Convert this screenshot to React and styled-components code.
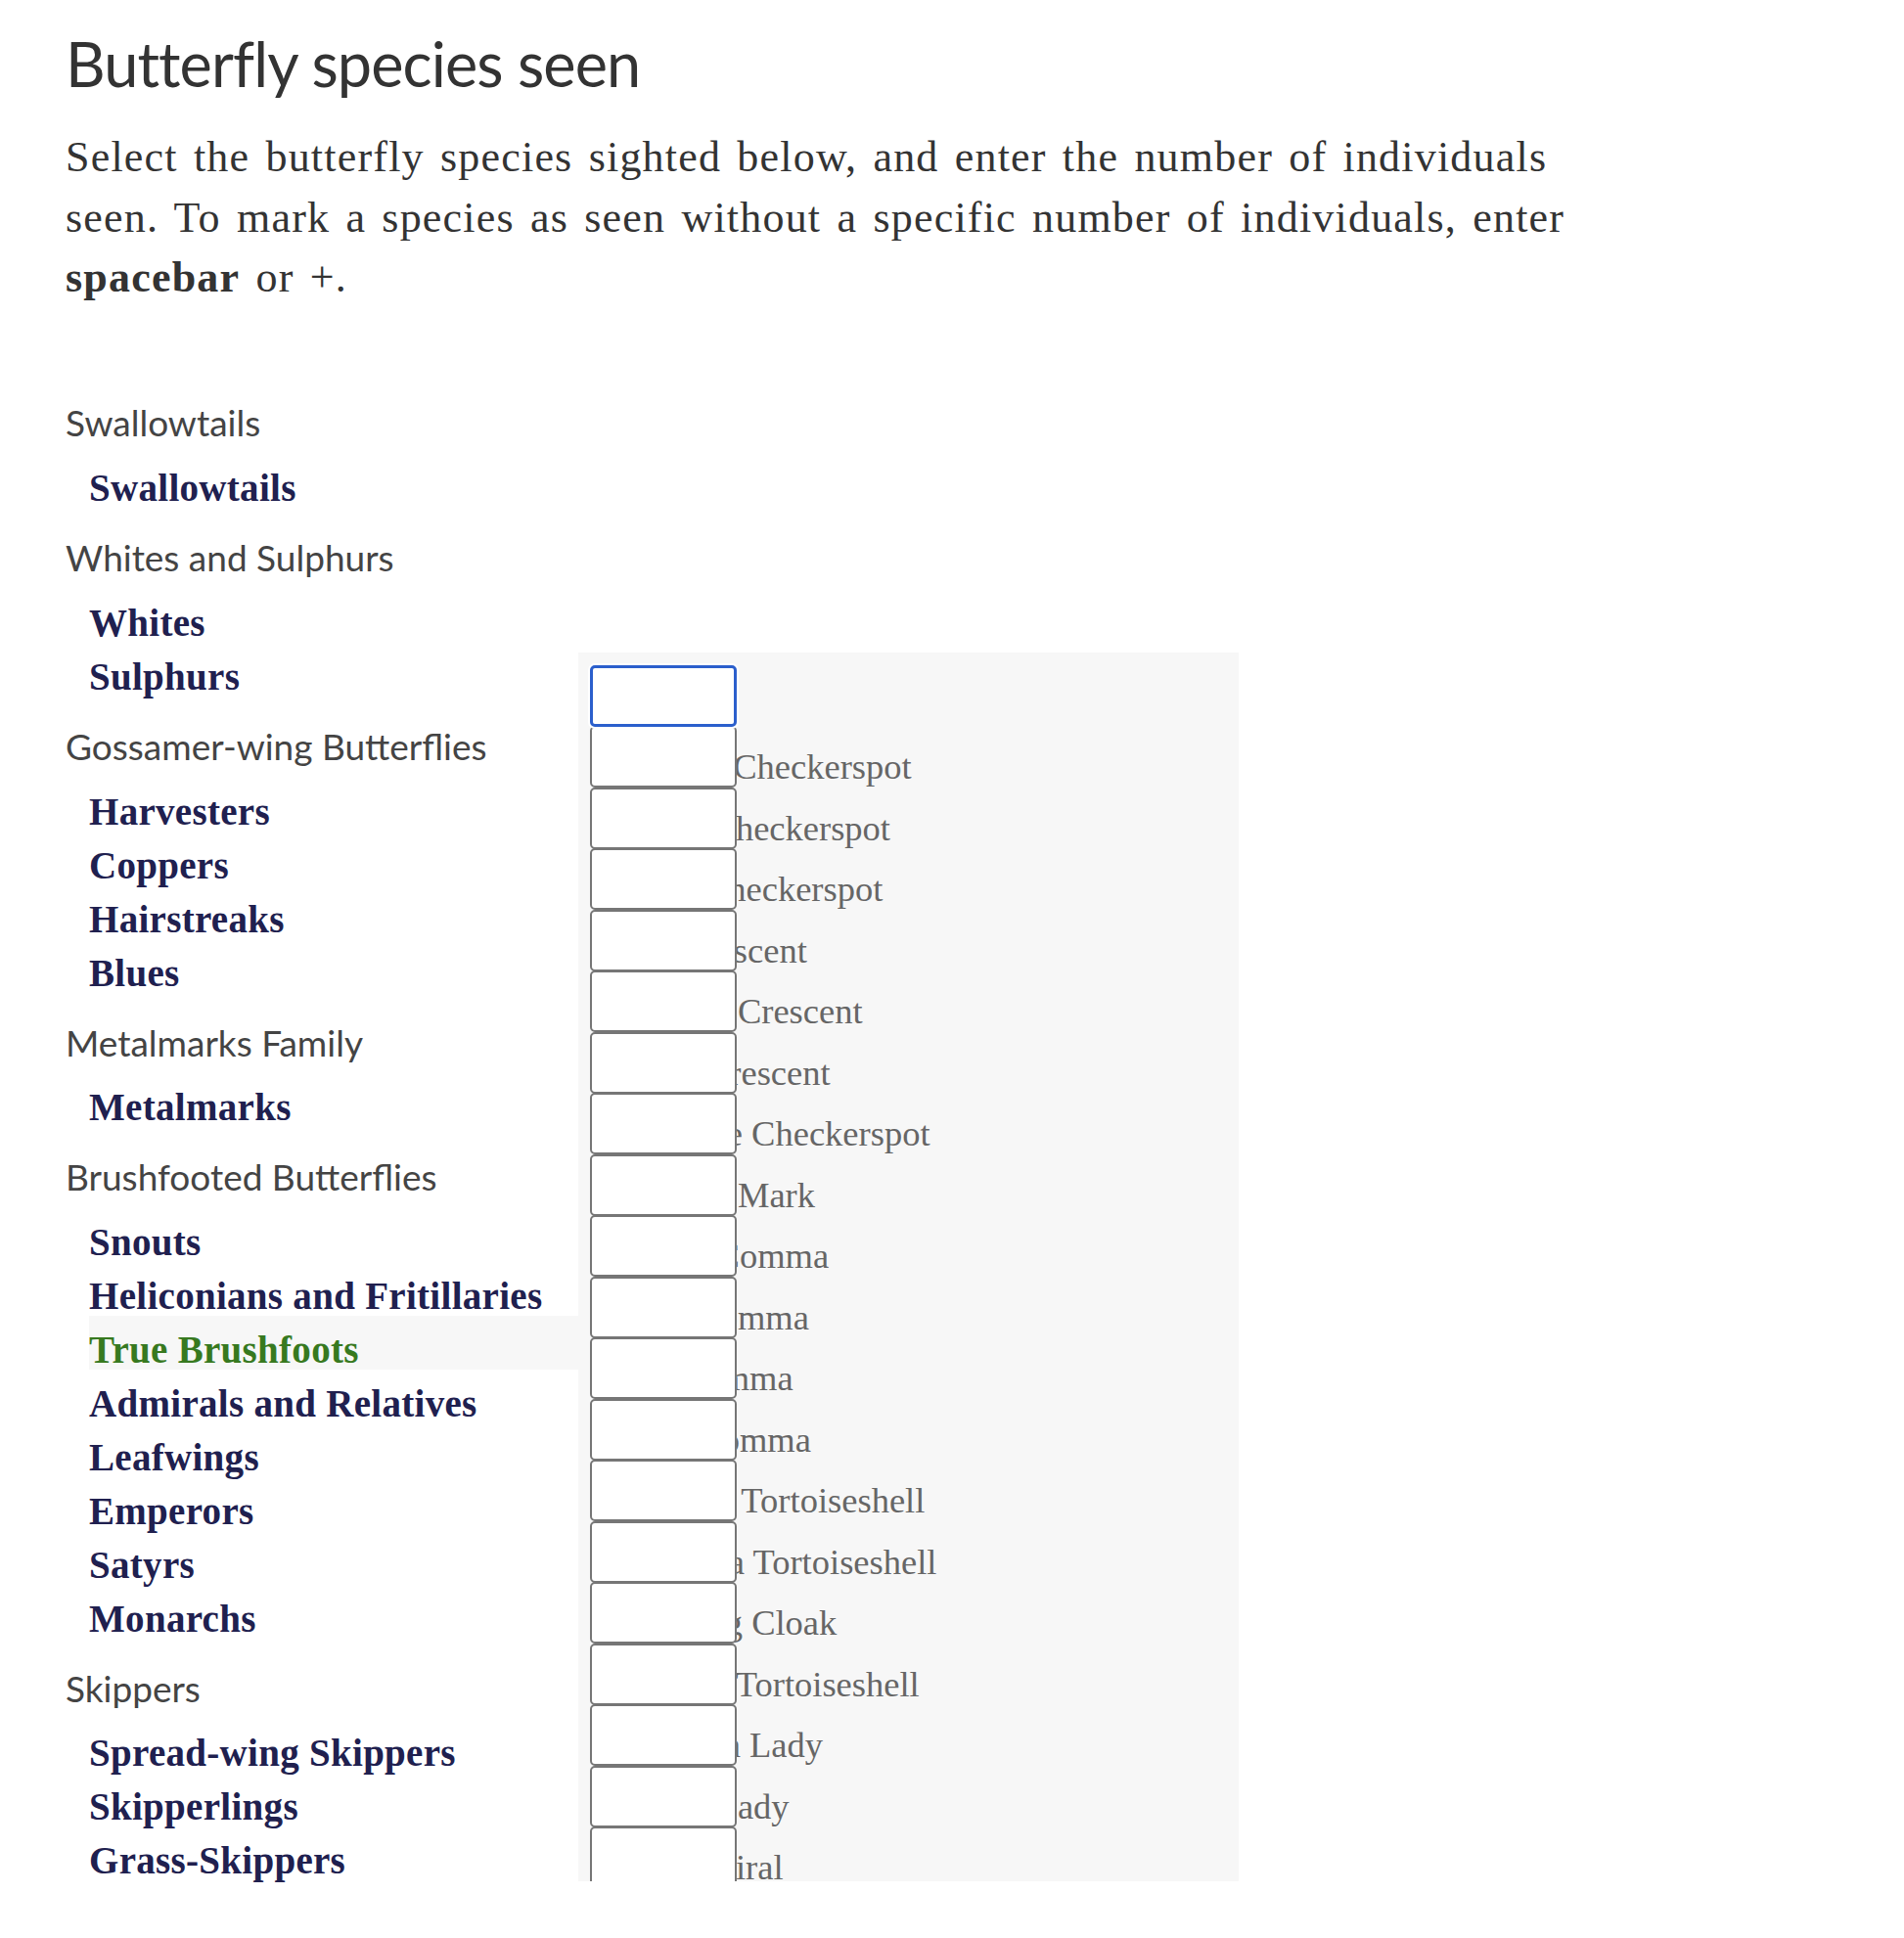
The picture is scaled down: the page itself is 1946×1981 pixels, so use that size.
import React from "react";
import styled, { createGlobalStyle, css } from "styled-components";

const GlobalStyle = createGlobalStyle`
  html, body { margin: 0; padding: 0; background: #ffffff; }
`;

const Page = styled.main`
  padding: 27px 0 60px 67px;
  box-sizing: border-box;
`;

const Title = styled.h1`
  margin: 0;
  font-family: Lato, "Open Sans", sans-serif;
  font-weight: 400;
  font-size: 63px;
  line-height: 76.8px;
  letter-spacing: -0.9px;
  color: #333333;
`;

const Intro = styled.p`
  margin: 26.5px 0 0;
  font-family: "Liberation Serif", serif;
  font-size: 44px;
  line-height: 61.5px;
  letter-spacing: 1.2px;
  word-spacing: 4px;
  color: #333333;
  white-space: nowrap;

  strong { font-weight: 700; }
`;

const Layout = styled.div`
  display: flex;
  align-items: flex-start;
  margin-top: 66px;
`;

const Nav = styled.nav`
  width: 524px;
  flex: none;
`;

const GroupTitle = styled.div`
  height: 83px;
  box-sizing: border-box;
  padding-top: 28.5px;
  font-family: Lato, "Open Sans", sans-serif;
  font-size: 37px;
  line-height: 45.6px;
  color: #444444;
  white-space: nowrap;
`;

const NavItem = styled.a`
  display: block;
  margin-left: 24px;
  height: 54.9px;
  box-sizing: border-box;
  padding-top: 15.4px;
  font-family: "Liberation Serif", serif;
  font-weight: 700;
  font-size: 39px;
  line-height: 1;
  letter-spacing: 0.3px;
  white-space: nowrap;
  text-decoration: none;
  color: ${(p) => (p.$active ? "#37791f" : "#20204f")};
  background: ${(p) => (p.$active ? "#f7f7f7" : "transparent")};
`;

const Panel = styled.section`
  flex: none;
  margin-top: 286px;
  width: 675px;
  height: 1256px;
  box-sizing: border-box;
  padding: 13px 0 0 12px;
  background: #f7f7f7;
  overflow: hidden;
`;

const Row = styled.div`
  position: relative;
  height: 62.5px;
`;

const SpeciesLabel = styled.label`
  display: block;
  height: 100%;
  box-sizing: border-box;
  padding: 24px 0 0 10px;
  font-family: "Liberation Serif", serif;
  font-size: 36.5px;
  line-height: 1;
  color: #666666;
  white-space: nowrap;
`;

const CountInput = styled.input`
  position: absolute;
  left: 0;
  top: 0;
  width: 150px;
  height: 63px;
  margin: 0;
  padding: 0 8px;
  box-sizing: border-box;
  border: 2px solid #767676;
  border-radius: 5px;
  background: #ffffff;
  font-family: "Liberation Sans", sans-serif;
  font-size: 28px;
  outline: none;

  ${(p) =>
    p.$focused &&
    css`
      border: 3px solid #2b5fcc;
      box-shadow: 0 0 0 2px #ffffff;
      z-index: 1;
    `}
`;

const groups = [
  { title: "Swallowtails", items: ["Swallowtails"] },
  { title: "Whites and Sulphurs", items: ["Whites", "Sulphurs"] },
  {
    title: "Gossamer-wing Butterflies",
    items: ["Harvesters", "Coppers", "Hairstreaks", "Blues"],
  },
  { title: "Metalmarks Family", items: ["Metalmarks"] },
  {
    title: "Brushfooted Butterflies",
    items: [
      "Snouts",
      "Heliconians and Fritillaries",
      "True Brushfoots",
      "Admirals and Relatives",
      "Leafwings",
      "Emperors",
      "Satyrs",
      "Monarchs",
    ],
  },
  {
    title: "Skippers",
    items: ["Spread-wing Skippers", "Skipperlings", "Grass-Skippers"],
  },
];

const species = [
  "",
  "Gorgone Checkerspot",
  "Silvery Checkerspot",
  "Harris' Checkerspot",
  "Pearl Crescent",
  "Northern Crescent",
  "Tawny Crescent",
  "Baltimore Checkerspot",
  "Question Mark",
  "Eastern Comma",
  "Green Comma",
  "Gray Comma",
  "Hoary Comma",
  "Compton Tortoiseshell",
  "California Tortoiseshell",
  "Mourning Cloak",
  "Milbert's Tortoiseshell",
  "American Lady",
  "Painted Lady",
  "Red Admiral",
];

export default function App() {
  return (
    <>
      <GlobalStyle />
      <Page>
        <Title>Butterfly species seen</Title>
        <Intro>
          Select the butterfly species sighted below, and enter the number of
          individuals
          <br />
          seen. To mark a species as seen without a specific number of
          individuals, enter
          <br />
          <strong>spacebar</strong> or +.
        </Intro>
        <Layout>
          <Nav>
            {groups.map((g) => (
              <div key={g.title}>
                <GroupTitle>{g.title}</GroupTitle>
                {g.items.map((it) => (
                  <NavItem key={it} href="#" $active={it === "True Brushfoots"}>
                    {it}
                  </NavItem>
                ))}
              </div>
            ))}
          </Nav>
          <Panel>
            {species.map((s, i) => (
              <Row key={i}>
                <SpeciesLabel htmlFor={`sp-${i}`}>{s}</SpeciesLabel>
                <CountInput id={`sp-${i}`} type="text" $focused={i === 0} />
              </Row>
            ))}
          </Panel>
        </Layout>
      </Page>
    </>
  );
}
